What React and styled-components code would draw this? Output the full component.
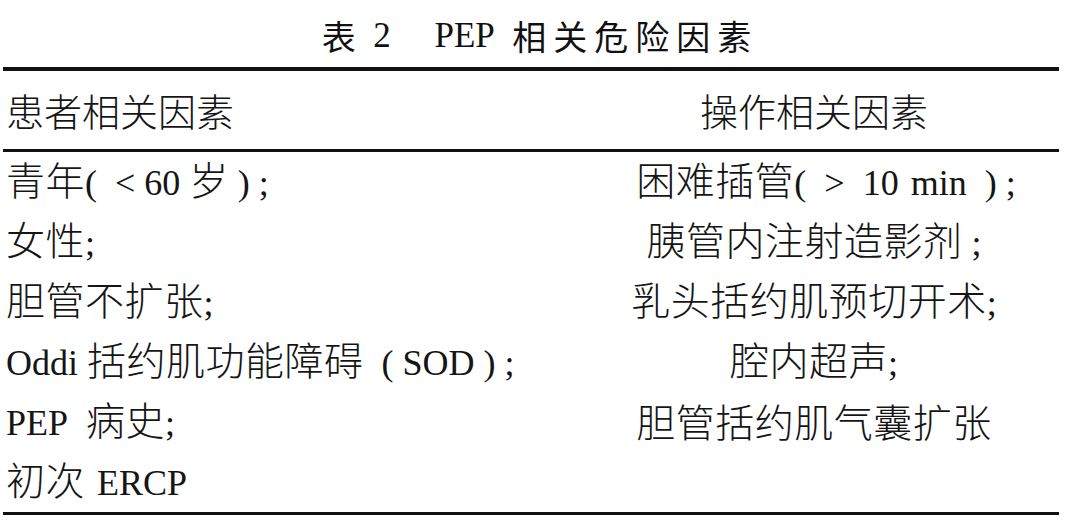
import React from "react";
import styled, { createGlobalStyle } from "styled-components";

const GlobalStyle = createGlobalStyle`
  html, body {
    margin: 0;
    padding: 0;
    background: #ffffff;
  }
  body {
    width: 1080px;
    height: 527px;
    overflow: hidden;
    color: #151515;
    font-family: "Liberation Serif", "Noto Sans CJK SC", serif;
  }
`;

const Page = styled.div`
  width: 1080px;
  height: 527px;
  background: #ffffff;
  display: flex;
  flex-direction: column;
`;

const Caption = styled.div`
  box-sizing: border-box;
  height: 67px;
  padding-top: 4px;
  display: flex;
  align-items: center;
  justify-content: center;
  font-family: "Noto Sans CJK SC", sans-serif;
  font-size: 34px;
  line-height: 1;
  white-space: pre;
  color: #111;
`;

const Spaced = styled.span`
  letter-spacing: 7px;
`;

const Latin = styled.span`
  font-family: "Liberation Serif", serif;
  font-size: ${(p) => p.$size || 36}px;
  letter-spacing: 0;
`;

const Table = styled.div`
  width: 1056px;
  margin-left: 3px;
  border-top: 4px solid #111;
  border-bottom: 3px solid #111;
`;

const Row = styled.div`
  display: grid;
  grid-template-columns: 566px 1fr;
  align-items: center;
  height: ${(p) => (p.$head ? 78 : 60)}px;
  border-bottom: ${(p) => (p.$head ? "3px solid #111" : "none")};
`;

const Cell = styled.div`
  box-sizing: border-box;
  padding-left: ${(p) => (p.$center ? p.$shift || 0 : 3)}px;
  padding-bottom: ${(p) => (p.$head ? 0 : 4)}px;
  text-align: ${(p) => (p.$center ? "center" : "left")};
  font-family: "Noto Sans CJK SC", sans-serif;
  font-weight: 300;
  font-size: ${(p) => (p.$head ? 38 : 39)}px;
  letter-spacing: ${(p) => (p.$head ? 0 : 0.5)}px;
  line-height: 1.2;
  white-space: pre;
`;

const patient = [
  <>
    青年<Latin>{"(\u00a0\u00a0<\u00a060\u00a0"}</Latin>岁
    <Latin>{"\u00a0)\u00a0;"}</Latin>
  </>,
  <>
    女性<Latin>;</Latin>
  </>,
  <>
    胆管不扩张<Latin>;</Latin>
  </>,
  <>
    <Latin>{"Oddi "}</Latin>括约肌功能障碍
    <Latin>{"\u00a0\u00a0(\u00a0SOD\u00a0)\u00a0;"}</Latin>
  </>,
  <>
    <Latin>{"PEP\u00a0\u00a0"}</Latin>病史<Latin>;</Latin>
  </>,
  <>
    初次<Latin>{" \u200aERCP"}</Latin>
  </>,
];

const procedure = [
  {
    shift: 24,
    content: (
      <>
        困难插管
        <Latin>
          {"(\u00a0\u00a0>\u00a0\u00a010\u00a0\u200amin\u00a0\u00a0)\u00a0;"}
        </Latin>
      </>
    ),
  },
  {
    shift: -6,
    content: (
      <>
        胰管内注射造影剂<Latin>{"\u00a0;"}</Latin>
      </>
    ),
  },
  {
    shift: 0,
    content: (
      <>
        乳头括约肌预切开术<Latin>;</Latin>
      </>
    ),
  },
  {
    shift: 0,
    content: (
      <>
        腔内超声<Latin>;</Latin>
      </>
    ),
  },
  { shift: 0, content: <>胆管括约肌气囊扩张</> },
  { shift: 0, content: null },
];

export default function App() {
  return (
    <>
      <GlobalStyle />
      <Page>
        <Caption>
          表<Latin $size={35}>{"\u20022\u2003 PEP\u2002"}</Latin>
          <Spaced>相关危险因素</Spaced>
        </Caption>
        <Table>
          <Row $head>
            <Cell $head>患者相关因素</Cell>
            <Cell $head $center>
              操作相关因素
            </Cell>
          </Row>
          {patient.map((left, i) => (
            <Row key={i}>
              <Cell>{left}</Cell>
              <Cell $center $shift={procedure[i].shift}>
                {procedure[i].content}
              </Cell>
            </Row>
          ))}
        </Table>
      </Page>
    </>
  );
}
